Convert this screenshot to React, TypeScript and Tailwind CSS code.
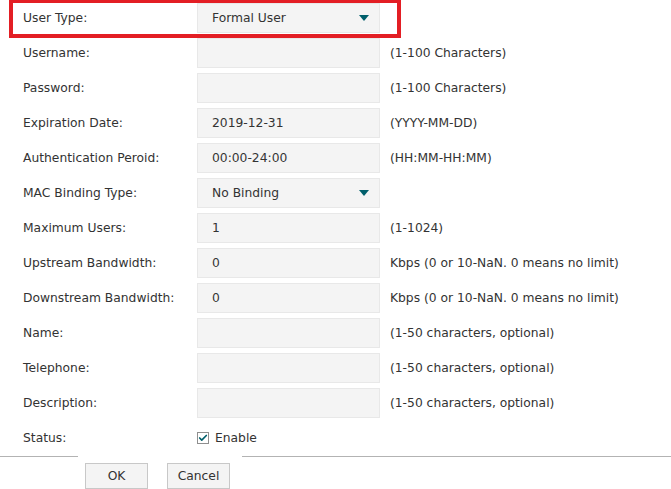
import { Check } from 'lucide-react';

type Row = {
  label: string;
  value?: string;
  hint?: string;
  select?: boolean;
};

const rows: Row[] = [
  { label: 'User Type:', value: 'Formal User', select: true },
  { label: 'Username:', hint: '(1-100 Characters)' },
  { label: 'Password:', hint: '(1-100 Characters)' },
  { label: 'Expiration Date:', value: '2019-12-31', hint: '(YYYY-MM-DD)' },
  { label: 'Authentication Peroid:', value: '00:00-24:00', hint: '(HH:MM-HH:MM)' },
  { label: 'MAC Binding Type:', value: 'No Binding', select: true },
  { label: 'Maximum Users:', value: '1', hint: '(1-1024)' },
  { label: 'Upstream Bandwidth:', value: '0', hint: 'Kbps (0 or 10-NaN. 0 means no limit)' },
  { label: 'Downstream Bandwidth:', value: '0', hint: 'Kbps (0 or 10-NaN. 0 means no limit)' },
  { label: 'Name:', hint: '(1-50 characters, optional)' },
  { label: 'Telephone:', hint: '(1-50 characters, optional)' },
  { label: 'Description:', hint: '(1-50 characters, optional)' },
];

const Caret = () => (
  <svg width="10" height="6" viewBox="0 0 10 6" className="absolute right-[10px] top-1/2 -translate-y-1/2">
    <path d="M0 0 H10 L5 6 Z" fill="#005f6b" />
  </svg>
);

export default function App() {
  return (
    <div
      className="relative w-[671px] h-[489px] bg-white text-[#333] text-[12.3px] overflow-hidden"
      style={{ fontFamily: '"DejaVu Sans", Verdana, sans-serif' }}
    >
      {/* highlight box around the first row */}
      <div className="absolute left-[9px] top-[-1px] w-[392px] h-[39px] border-[4px] border-[#e31e24] pointer-events-none" />

      <div className="pt-[3px] flex flex-col gap-[5px]">
        {rows.map((r) => (
          <div key={r.label} className="flex items-center h-[30px]">
            <div className="w-[197px] pl-[23px]">{r.label}</div>
            <div className="relative w-[183px] h-[30px] bg-[#f4f4f4] border border-[#e8e8e8] flex items-center pl-[14px]">
              {r.value}
              {r.select && <Caret />}
            </div>
            {r.hint && <div className="ml-[10px]">{r.hint}</div>}
          </div>
        ))}
        <div className="flex items-center h-[30px]">
          <div className="w-[197px] pl-[23px]">Status:</div>
          <div className="w-[12px] h-[12px] border border-[#8f8f8f] bg-white flex items-center justify-center">
            <Check className="w-[10px] h-[10px] text-[#005f6b]" strokeWidth={4} />
          </div>
          <div className="ml-[6px]">Enable</div>
        </div>
      </div>

      <div className="mt-[3px] flex h-px">
        <div className="w-[78px] bg-[#b3b3b3]" />
        <div className="w-[164px]" />
        <div className="flex-1 bg-[#b3b3b3]" />
      </div>

      <div className="mt-[6px] flex gap-[19px] pl-[85px]">
        <button className="w-[63px] h-[26px] bg-[#f4f4f4] border border-[#c8c8c8] text-[#333]">OK</button>
        <button className="w-[63px] h-[26px] bg-[#f4f4f4] border border-[#c8c8c8] text-[#333]">Cancel</button>
      </div>
    </div>
  );
}
